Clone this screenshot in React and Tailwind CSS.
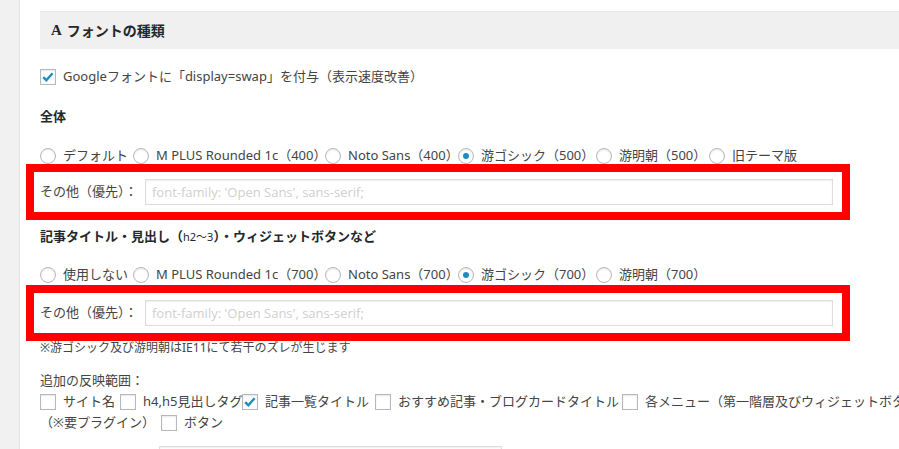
import React from "react";

const font = { fontFamily: '"Noto Sans", "Noto Sans CJK JP", sans-serif' };

function Radio({ checked }) {
  return (
    <span className="relative inline-block w-[16px] h-[16px] shrink-0 rounded-full border border-[#b4b9be] bg-white shadow-[inset_0_1px_2px_rgba(0,0,0,0.1)]">
      {checked && (
        <span className="absolute left-[4px] top-[4px] w-[6px] h-[6px] rounded-full bg-[#1e8cbe]" />
      )}
    </span>
  );
}

function Check({ checked }) {
  return (
    <span className="relative inline-block w-[16px] h-[16px] shrink-0 border border-[#b4b9be] bg-white shadow-[inset_0_1px_2px_rgba(0,0,0,0.1)]">
      {checked && (
        <svg viewBox="0 0 16 16" className="absolute left-[-1px] top-[-1px] w-[16px] h-[16px]">
          <path d="M3.2 8.2 L6.3 11.2 L12.6 4.2" fill="none" stroke="#1e8cbe" strokeWidth="2.4" strokeLinecap="butt" />
        </svg>
      )}
    </span>
  );
}

function RadioItem({ w, label, checked }) {
  return (
    <label className="flex items-center shrink-0" style={{ width: w }}>
      <Radio checked={checked} />
      <span className="ml-[7px] whitespace-nowrap">{label}</span>
    </label>
  );
}

function CheckItem({ w, label, checked }) {
  return (
    <label className="flex items-center shrink-0" style={w ? { width: w } : undefined}>
      <Check checked={checked} />
      <span className="ml-[7px] whitespace-nowrap">{label}</span>
    </label>
  );
}

function RedBox() {
  return (
    <div className="ml-[-14px] w-[824px] h-[56px] border-[8px] border-[#ff0000] flex items-center pl-[6px] pr-[9px]">
      <span className="whitespace-nowrap w-[105px] shrink-0">その他（優先）：</span>
      <input
        className="flex-1 h-[26px] border border-[#dddddd] bg-white px-[6px] text-[13px] shadow-[inset_0_1px_2px_rgba(0,0,0,0.07)] placeholder:text-[#cfcfcf] outline-none"
        placeholder="font-family: 'Open Sans', sans-serif;"
        style={{ fontFamily: '"Open Sans", "Noto Sans", sans-serif' }}
      />
    </div>
  );
}

export default function App() {
  return (
    <div className="w-[899px] h-[449px] overflow-hidden flex bg-white text-[13px] text-[#444444]" style={font}>
      <div className="w-[20px] shrink-0 bg-[#f1f1f1] border-r border-[#e4e4e4]" />
      <div className="flex-1 pl-[20px] pt-[11px] min-w-0">
        <div className="h-[38px] bg-[#f0f0f0] border-t border-[#e8e8e8] flex items-center pl-[11px] font-bold text-[14px] text-[#23282d] mr-[-20px]">
          <span className="mr-[5px] text-[15px]" style={{ fontFamily: '"Liberation Serif", serif' }}>A</span>
          <span>フォントの種類</span>
        </div>

        <div className="mt-[18px] h-[20px] flex items-center">
          <CheckItem checked label="Googleフォントに「display=swap」を付与（表示速度改善）" />
        </div>

        <div className="mt-[20px] h-[20px] flex items-center font-bold text-[#23282d]">全体</div>

        <div className="mt-[19px] h-[20px] flex items-center">
          <RadioItem w={93} label="デフォルト" />
          <RadioItem w={192} label="M PLUS Rounded 1c（400）" />
          <RadioItem w={133} label="Noto Sans（400）" />
          <RadioItem w={138} label="游ゴシック（500）" checked />
          <RadioItem w={113} label="游明朝（500）" />
          <RadioItem w={120} label="旧テーマ版" />
        </div>

        <div className="mt-[-2px]">
          <RedBox />
        </div>

        <div className="mt-[7px] h-[20px] flex items-center font-bold text-[#23282d]">
          記事タイトル・見出し（<span className="text-[11px] font-normal">h2〜3</span>）・ウィジェットボタンなど
        </div>

        <div className="mt-[18px] h-[20px] flex items-center">
          <RadioItem w={93} label="使用しない" />
          <RadioItem w={192} label="M PLUS Rounded 1c（700）" />
          <RadioItem w={133} label="Noto Sans（700）" />
          <RadioItem w={138} label="游ゴシック（700）" checked />
          <RadioItem w={113} label="游明朝（700）" />
        </div>

        <RedBox />

        <div className="mt-[-1px] h-[16px] flex items-center text-[12px]">※游ゴシック及び游明朝はIE11にて若干のズレが生じます</div>

        <div className="mt-[15px] h-[20px] flex items-center">追加の反映範囲：</div>

        <div className="mt-[1px] h-[20px] flex items-center">
          <CheckItem w={80} label="サイト名" />
          <CheckItem w={122} label="h4,h5見出しタグ" />
          <CheckItem w={133} label="記事一覧タイトル" checked />
          <CheckItem w={247} label="おすすめ記事・ブログカードタイトル" />
          <CheckItem label="各メニュー（第一階層及びウィジェットボタン）" />
        </div>

        <div className="mt-[1px] h-[20px] flex items-center">
          <span className="w-[121px] shrink-0 whitespace-nowrap">（※要プラグイン）</span>
          <CheckItem label="ボタン" />
        </div>

        <div className="mt-[13px] ml-[119px] w-[343px] h-[28px] border border-[#dddddd] bg-white shadow-[inset_0_1px_2px_rgba(0,0,0,0.07)]" />
      </div>
    </div>
  );
}
